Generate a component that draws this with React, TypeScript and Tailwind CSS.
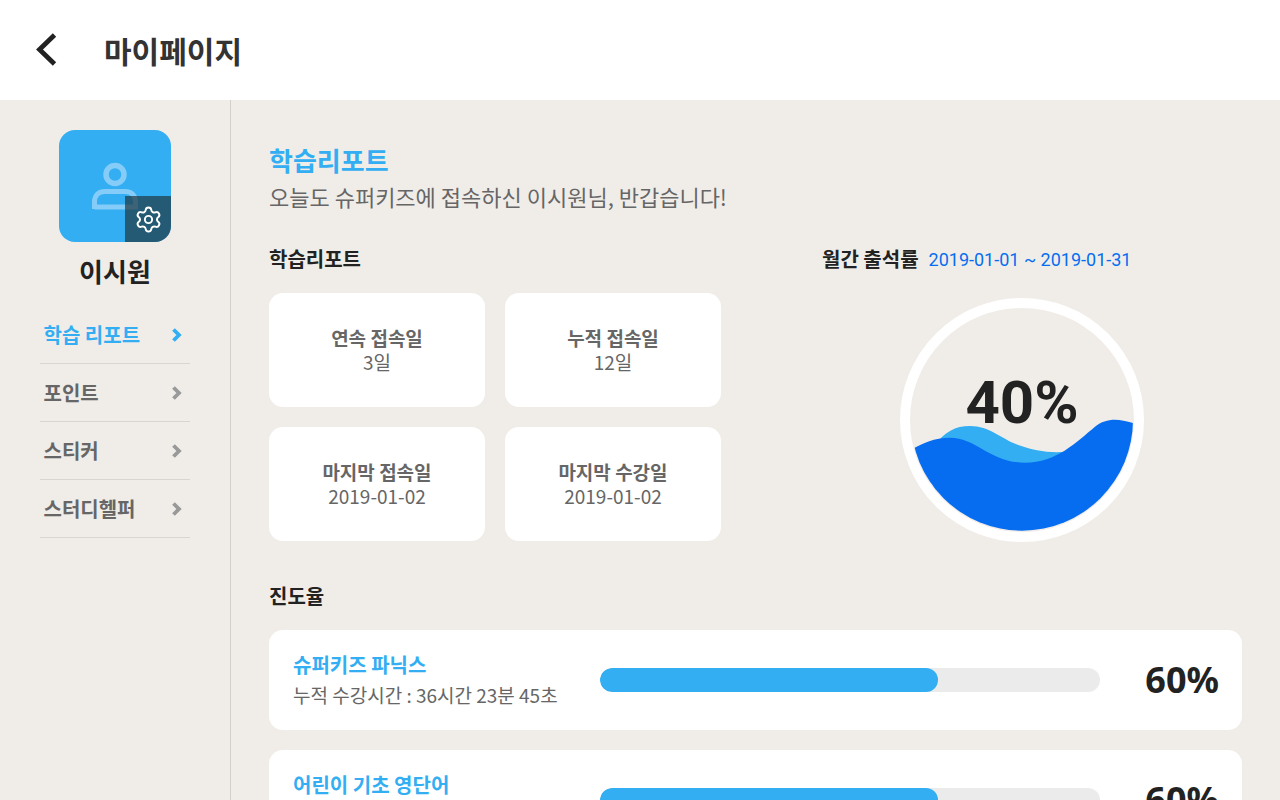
import { Settings } from "lucide-react";

function Chevron({ active }: { active?: boolean }) {
  return (
    <svg width="12" height="16" viewBox="0 0 12 16" className={active ? "text-[#33aef2]" : "text-[#999999]"}>
      <polyline points="2.5,2.5 8,8 2.5,13.5" fill="none" stroke="currentColor" strokeWidth="3.8" />
    </svg>
  );
}

function MenuItem({ label, active }: { label: string; active?: boolean }) {
  return (
    <div className="h-[58px] border-b border-[#d9d6d2] flex items-center justify-between pl-1 pr-[7px]">
      <span className={`text-[20px] font-bold ${active ? "text-[#33aef2]" : "text-[#666666]"}`}>{label}</span>
      <Chevron active={active} />
    </div>
  );
}

function StatCard({ title, value }: { title: string; value: string }) {
  return (
    <div className="h-[114px] bg-white rounded-[14px] flex flex-col items-center justify-center">
      <div className="text-[19px] leading-[24px] font-bold text-[#666666]">{title}</div>
      <div className="text-[19px] leading-[24px] font-normal text-[#666666]">{value}</div>
    </div>
  );
}

function Course({ title, time }: { title: string; time: string }) {
  return (
    <div className="h-[100px] shrink-0 bg-white rounded-[14px] flex items-center pl-6 pr-[23px]">
      <div className="w-[307px] shrink-0">
        <div className="text-[20px] leading-[30px] font-bold text-[#33aef2]">{title}</div>
        <div className="text-[19px] leading-[30px] text-[#666666]">{time}</div>
      </div>
      <div className="w-[500px] h-6 rounded-full bg-[#ebebeb] overflow-hidden">
        <div className="h-full w-[338px] rounded-full bg-[#33aef2]" />
      </div>
      <div className="flex-1 text-right text-[36px] leading-none font-bold font-['Noto_Sans',sans-serif] text-[#222222]">60%</div>
    </div>
  );
}

export default function App() {
  return (
    <div className="h-screen w-[1280px] overflow-hidden flex flex-col bg-[#f0ede9] font-['Noto_Sans_CJK_KR','Noto_Sans',sans-serif]">
      <header className="h-[100px] shrink-0 bg-white flex items-center pl-[32px]">
        <svg width="28" height="38" viewBox="0 0 28 38" className="text-[#222222]">
          <polyline points="22.5,4 7.5,18.5 22.5,33" fill="none" stroke="currentColor" strokeWidth="4.8" />
        </svg>
        <h1 className="ml-[44px] text-[30px] font-bold text-[#333333]">마이페이지</h1>
      </header>
      <div className="flex-1 flex min-h-0">
        <aside className="w-[231px] shrink-0 border-r border-[#d4d1cd] flex flex-col items-center pt-[30px]">
          <div className="relative w-[112px] h-[112px] rounded-2xl bg-[#33aef2] overflow-hidden">
            <svg width="112" height="112" viewBox="0 0 112 112" className="absolute inset-0 text-[#85ccf8]">
              <circle cx="56" cy="44.5" r="9" fill="none" stroke="currentColor" strokeWidth="5.5" />
              <path d="M35.5 79 V72 C35.5 65 40 61.5 46 61.5 H66 C72 61.5 76.5 65 76.5 72 V77 H35.5" fill="none" stroke="currentColor" strokeWidth="5" />
            </svg>
            <div className="absolute right-0 bottom-0 w-[46px] h-[46px] bg-[#20363f]/70 flex items-center justify-center">
              <Settings size={29} strokeWidth={1.6} className="text-white" />
            </div>
          </div>
          <div className="mt-[10px] text-[26px] leading-[38px] font-bold text-[#222222]">이시원</div>
          <nav className="w-[150px] mt-[16px] -ml-px">
            <MenuItem label="학습 리포트" active />
            <MenuItem label="포인트" />
            <MenuItem label="스티커" />
            <MenuItem label="스터디헬퍼" />
          </nav>
        </aside>
        <main className="flex-1 min-w-0 pl-[38px] pr-[38px] pt-[41px] overflow-hidden flex flex-col">
          <h2 className="text-[26px] leading-[38px] font-bold text-[#33aef2]">학습리포트</h2>
          <p className="text-[22px] leading-[38px] -mt-[2px] text-[#666666]">오늘도 슈퍼키즈에 접속하신 이시원님, 반갑습니다!</p>
          <div className="flex mt-[29px]">
            <section className="w-[452px] shrink-0">
              <h3 className="text-[20px] leading-[30px] font-bold text-[#222222]">학습리포트</h3>
              <div className="grid grid-cols-[216px_216px] gap-5 mt-[19px]">
                <StatCard title="연속 접속일" value="3일" />
                <StatCard title="누적 접속일" value="12일" />
                <StatCard title="마지막 접속일" value="2019-01-02" />
                <StatCard title="마지막 수강일" value="2019-01-02" />
              </div>
            </section>
            <section className="ml-[101px] flex-1">
              <div className="flex items-center h-[30px]">
                <h3 className="text-[20px] font-bold text-[#222222]">월간 출석률</h3>
                <span className="ml-[10px] text-[18px] font-['Roboto',sans-serif] text-[#066df0]">2019-01-01 ~ 2019-01-31</span>
              </div>
              <div className="relative w-[244px] h-[244px] mt-6 ml-[78px]">
                <svg width="244" height="244" viewBox="30 24 732 732" className="absolute inset-0">
                  <circle cx="396" cy="390" r="351" fill="none" stroke="#ffffff" strokeWidth="30" />
                  <defs>
                    <clipPath id="inner"><circle cx="396" cy="389" r="333" /></clipPath>
                  </defs>
                  <g clipPath="url(#inner)">
                    <path d="M130 470 C165 425 195 408 240 408 C300 408 330 445 385 465 C430 482 480 490 530 485 L600 600 L130 600 Z" fill="#33aef2" />
                    <path d="M60 480 C100 460 130 443 180 443 C260 443 300 518 405 518 C500 518 560 455 615 410 C650 382 690 385 740 403 L740 740 L60 740 Z" fill="#066df0" />
                  </g>
                </svg>
                <div className="absolute left-0 right-0 top-[72px] text-center text-[60px] leading-[66px] font-['Roboto',sans-serif] font-bold text-[#222222]">40%</div>
              </div>
            </section>
          </div>
          <h3 className="mt-[39px] text-[20px] leading-[30px] font-bold text-[#222222]">진도율</h3>
          <div className="flex flex-col gap-5 mt-[19px]">
            <Course title="슈퍼키즈 파닉스" time="누적 수강시간 : 36시간 23분 45초" />
            <Course title="어린이 기초 영단어" time="누적 수강시간 : 36시간 23분 45초" />
          </div>
        </main>
      </div>
    </div>
  );
}
